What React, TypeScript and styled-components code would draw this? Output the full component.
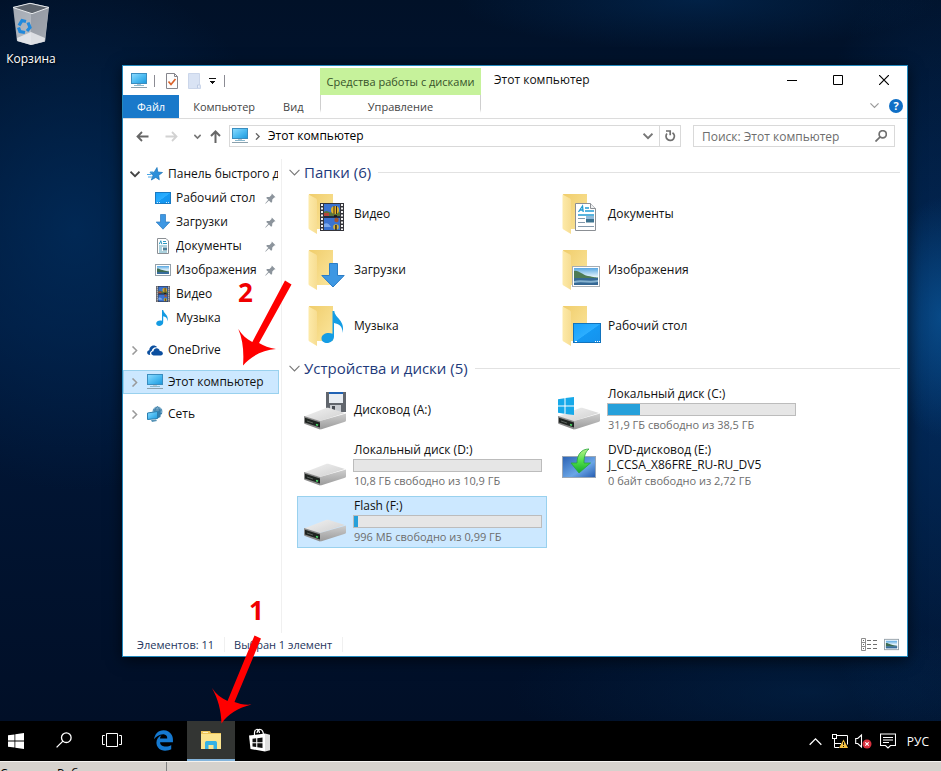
import React from "react";
import styled, { createGlobalStyle } from "styled-components";
import { FaEdgeLegacy } from "react-icons/fa6";

const GlobalStyle = createGlobalStyle`
  * { box-sizing: border-box; }
  html, body, #root { height: 100%; }
  body { margin: 0; background: #000; }
  body, button, input {
    font-family: "Open Sans", "Noto Sans", sans-serif;
    font-size: 12px;
    line-height: 15px;
  }
  button { border: 0; padding: 0; margin: 0; background: none; color: inherit; cursor: default; }
  svg { display: block; flex: none; }
`;

/* ---------- layout ---------- */

const Screen = styled.div`
  position: relative;
  display: flex;
  flex-direction: column;
  min-height: 100%;
  overflow: hidden;
`;

const Desktop = styled.main`
  flex: 1;
  display: flex;
  padding: 65px 33px 64px 0;
  background:
    radial-gradient(ellipse 60px 120px at 100% 44%, rgba(10, 84, 150, 0.75), transparent),
    radial-gradient(ellipse 150px 420px at 100% 50%, rgba(3, 52, 108, 0.7), transparent),
    radial-gradient(ellipse 220px 260px at 8% 32%, rgba(1, 48, 98, 0.7), transparent),
    radial-gradient(ellipse 240px 50px at 74% 0%, rgba(2, 40, 82, 0.7), transparent),
    radial-gradient(ellipse 300px 70px at 86% 96%, rgba(2, 36, 74, 0.6), transparent),
    linear-gradient(#011128, #01183a 45%, #010f27);
`;

const ShortcutColumn = styled.div`
  width: 122px;
  flex: none;
  margin-top: -63px;
`;

const Shortcut = styled.button`
  display: flex;
  flex-direction: column;
  align-items: center;
  gap: 5px;
  width: 62px;
  color: #fff;
  text-shadow: 1px 1px 2px #000;
`;

const Window = styled.section`
  flex: 1;
  min-width: 0;
  display: flex;
  flex-direction: column;
  background: #fff;
  border: 1px solid #2389bd;
  box-shadow: 0 3px 14px rgba(0, 0, 0, 0.6);
  color: #111;
`;

const Header = styled.header`
  display: flex;
  border-bottom: 1px solid #dcdcdc;
`;

const HeaderLeft = styled.div`
  width: 197px;
`;

const QuickAccess = styled.div`
  display: flex;
  align-items: center;
  height: 29px;
  padding-left: 8px;
`;

const ToolButton = styled.button<{ $gap: number }>`
  margin-left: ${(p) => p.$gap}px;
`;

const ToolDivider = styled.span<{ $gap: number }>`
  width: 1px;
  height: 12px;
  margin-left: ${(p) => p.$gap}px;
  background: #8b8b93;
`;

const Tabs = styled.div`
  display: flex;
  height: 23px;
`;

const Tab = styled.button<{ $active?: boolean }>`
  padding: 0 14px;
  font-size: 11px;
  color: ${(p) => (p.$active ? "#fff" : "#444")};
  background: ${(p) => (p.$active ? "#1979ca" : "transparent")};
`;

const ContextTab = styled.div`
  display: flex;
  flex-direction: column;
  width: 161px;
  padding-top: 2px;
`;

const ContextTitle = styled.div`
  height: 27px;
  font-size: 11px;
  line-height: 28px;
  text-align: center;
  white-space: nowrap;
  color: #37532a;
  background: #c6f29b;
`;

const ContextButton = styled.button`
  height: 23px;
  font-size: 11px;
  color: #444;
  border: 1px solid;
  border-width: 0 1px;
  border-image: linear-gradient(#cfcfcf 60%, #fff 75%) 1;
`;

const HeaderRight = styled.div`
  flex: 1;
  display: flex;
  flex-direction: column;
`;

const TitleRow = styled.div`
  display: flex;
  align-items: center;
  height: 27px;
  padding-left: 13px;
`;

const Title = styled.h1`
  flex: 1;
  margin: 0;
  font-size: 12px;
  font-weight: 400;
`;

const Caption = styled.button`
  display: flex;
  align-items: center;
  justify-content: center;
  width: 46px;
  height: 27px;
`;

const HelpRow = styled.div`
  display: flex;
  align-items: center;
  justify-content: flex-end;
  gap: 10px;
  height: 25px;
  padding-right: 4px;
`;

const Help = styled.button`
  width: 14px;
  height: 14px;
  border-radius: 50%;
  background: #0f6fc6;
  color: #fff;
  font-size: 11px;
  font-weight: 700;
  line-height: 14px;
`;

const AddressRow = styled.div`
  display: flex;
  align-items: center;
  height: 34px;
  padding: 0 12px;
`;

const NavButton = styled.button<{ $width: number }>`
  display: flex;
  align-items: center;
  justify-content: center;
  width: ${(p) => p.$width}px;
  height: 20px;
`;

const AddressBox = styled.div`
  flex: 1;
  display: flex;
  align-items: center;
  gap: 6px;
  height: 22px;
  padding-left: 2px;
  border: 1px solid #d9d9d9;
`;

const Crumb = styled.button`
  flex: 1;
  padding: 0 0 1px 1px;
  text-align: left;
  color: #000;
`;

const RefreshButton = styled(NavButton)`
  border-left: 1px solid #d9d9d9;
`;

const SearchBox = styled.label`
  display: flex;
  align-items: center;
  width: 202px;
  height: 22px;
  margin-left: 12px;
  padding: 0 7px 0 8px;
  border: 1px solid #d9d9d9;
`;

const SearchInput = styled.input`
  flex: 1;
  min-width: 0;
  padding: 0;
  border: 0;
  outline: 0;
  background: none;
  &::placeholder { color: #6d6d6d; opacity: 1; }
`;

const Body = styled.div`
  flex: 1;
  display: flex;
  margin-top: 6px;
`;

const Sidebar = styled.nav`
  display: flex;
  flex-direction: column;
  gap: 8px;
  width: 159px;
  padding: 3px 2px 0 0;
  border-right: 1px solid #f0f0f0;
`;

const TreeGroup = styled.div`
  display: flex;
  flex-direction: column;
`;

const TreeItem = styled.button<{ $nested?: boolean; $selected?: boolean }>`
  display: flex;
  align-items: center;
  height: 24px;
  gap: 5px;
  padding-left: ${(p) => (p.$nested ? 31 : 6)}px;
  padding-right: ${(p) => (p.$nested ? 2 : 0)}px;
  border: 1px solid ${(p) => (p.$selected ? "#99d1ee" : "transparent")};
  background: ${(p) => (p.$selected ? "#cce8ff" : "transparent")};
  color: #111;
`;

const TreeChevron = styled.span`
  width: 12px;
`;

const TreeLabel = styled.span`
  flex: 1;
  min-width: 0;
  padding-bottom: 1px;
  overflow: hidden;
  white-space: nowrap;
  text-align: left;
`;

const Content = styled.div`
  flex: 1;
  display: flex;
  flex-direction: column;
  gap: 5px;
  padding: 2px 7px 0 7px;
`;

const GroupHeader = styled.h2`
  display: flex;
  align-items: center;
  gap: 4px;
  height: 22px;
  margin: 0 0 5px;
  font-size: 15px;
  font-weight: 400;
  line-height: 22px;
  color: #1e3a7b;
  &::after {
    content: "";
    flex: 1;
    height: 1px;
    margin-left: 3px;
    background: #e2e2e2;
  }
`;

const Tiles = styled.div`
  display: grid;
  grid-template-columns: repeat(auto-fill, 250px);
  gap: 4px;
  padding-left: 8px;
`;

const Tile = styled.button<{ $selected?: boolean }>`
  display: flex;
  gap: 2px;
  height: 52px;
  padding: 1px 4px 1px 5px;
  text-align: left;
  color: #111;
  border: 1px solid ${(p) => (p.$selected ? "#99d1ee" : "transparent")};
  background: ${(p) => (p.$selected ? "#cce8ff" : "transparent")};
`;

const TileText = styled.span<{ $center?: boolean }>`
  flex: 1;
  display: flex;
  flex-direction: column;
  padding: 0 0 ${(p) => (p.$center ? 2 : 0)}px 1px;
  justify-content: ${(p) => (p.$center ? "center" : "flex-start")};
`;

const Muted = styled.span`
  margin-top: 1px;
  font-size: 11px;
  color: #6d6d6d;
`;

const Meter = styled.span`
  display: block;
  height: 13px;
  margin: 2px 0 0 -1px;
  border: 1px solid #bcbcbc;
  background: #e6e6e6;
`;

const MeterFill = styled.span`
  display: block;
  height: 100%;
  background: #26a0da;
`;

const StatusBar = styled.footer`
  display: flex;
  align-items: center;
  height: 23px;
  padding: 0 8px 0 14px;
  color: #25355c;
`;

const StatusText = styled.span`
  margin-right: 9px;
  padding-right: 10px;
  font-size: 11px;
  border-right: 1px solid #f0f0f0;
`;

const ViewButtons = styled.div`
  display: flex;
  gap: 7px;
  margin-left: auto;
`;

const Taskbar = styled.footer`
  display: flex;
  height: 40px;
  background: #000;
  color: #fff;
`;

const StartButton = styled.button`
  display: flex;
  align-items: center;
  width: 40px;
  padding-left: 8px;
`;

const TaskButton = styled.button<{ $active?: boolean }>`
  display: flex;
  align-items: center;
  justify-content: center;
  width: 48px;
  background: ${(p) => (p.$active ? "#333533" : "transparent")};
  border-bottom: 2px solid ${(p) => (p.$active ? "#85b5dc" : "transparent")};
`;

const AppButtons = styled.div`
  display: flex;
  margin-left: 3px;
`;

const Tray = styled.div`
  display: flex;
  align-items: center;
  margin-left: auto;
  padding-right: 12px;
`;

const TrayButton = styled.button`
  display: flex;
  justify-content: center;
  width: 24px;
`;

const Language = styled.button`
  margin-left: 7px;
`;

const HostBar = styled.div`
  display: flex;
  height: 10px;
  overflow: hidden;
  background: #d6d2cd;
  border-top: 1px solid #f4f2ef;
  color: #000;
`;

const HostCell = styled.span<{ $width: number }>`
  width: ${(p) => p.$width}px;
  height: 19px;
  padding-top: 4px;
  & + & { border-right: 1px solid #808080; }
`;

const Annotation = styled.div<{ $left: number; $top?: number; $bottom?: number }>`
  position: absolute;
  left: ${(p) => p.$left}px;
  top: ${(p) => (p.$top === undefined ? "auto" : `${p.$top}px`)};
  bottom: ${(p) => (p.$bottom === undefined ? "auto" : `${p.$bottom}px`)};
  color: #f00000;
  font-size: 26px;
  font-weight: 700;
  line-height: 26px;
  pointer-events: none;
`;

/* ---------- icons ---------- */

const HiddenDefs = styled.svg`
  position: absolute;
`;

const Gradients = () => (
  <HiddenDefs width="0" height="0" aria-hidden="true">
    <defs>
      <linearGradient id="screen" x1="0" y1="0" x2="1" y2="1">
        <stop offset="0" stopColor="#8fdcff" />
        <stop offset="0.5" stopColor="#4ebcf2" />
        <stop offset="1" stopColor="#1b98dc" />
      </linearGradient>
      <linearGradient id="folderBack" x1="0" y1="0" x2="1" y2="1">
        <stop offset="0" stopColor="#f0cd6c" />
        <stop offset="1" stopColor="#fbe69d" />
      </linearGradient>
      <linearGradient id="folderFront" x1="0" y1="0" x2="1" y2="0">
        <stop offset="0" stopColor="#fdeaa9" />
        <stop offset="1" stopColor="#f7dd92" />
      </linearGradient>
      <linearGradient id="driveTop" x1="0" y1="0" x2="1" y2="1">
        <stop offset="0" stopColor="#f2f2f2" />
        <stop offset="1" stopColor="#cfcfcf" />
      </linearGradient>
      <linearGradient id="driveSide" x1="0" y1="0" x2="0" y2="1">
        <stop offset="0" stopColor="#cecece" />
        <stop offset="1" stopColor="#9b9b9b" />
      </linearGradient>
      <linearGradient id="sky" x1="0" y1="0" x2="0" y2="1">
        <stop offset="0" stopColor="#58a7e2" />
        <stop offset="0.5" stopColor="#e0f1fb" />
        <stop offset="1" stopColor="#487fae" />
      </linearGradient>
      <linearGradient id="desktopBlue" x1="0" y1="0" x2="1" y2="1">
        <stop offset="0" stopColor="#16a1fa" />
        <stop offset="0.5" stopColor="#2caeff" />
        <stop offset="0.52" stopColor="#1499f3" />
        <stop offset="1" stopColor="#1592ec" />
      </linearGradient>
      <linearGradient id="dvd" x1="0" y1="0" x2="1" y2="1">
        <stop offset="0" stopColor="#2b62b4" />
        <stop offset="0.6" stopColor="#6aa5e6" />
        <stop offset="1" stopColor="#245bb0" />
      </linearGradient>
      <linearGradient id="green" x1="0" y1="0" x2="0" y2="1">
        <stop offset="0" stopColor="#b9f08b" />
        <stop offset="0.5" stopColor="#4fe04a" />
        <stop offset="1" stopColor="#16a82c" />
      </linearGradient>
      <linearGradient id="binSide" x1="0" y1="0" x2="1" y2="1">
        <stop offset="0" stopColor="#8d939b" />
        <stop offset="0.7" stopColor="#b9bec5" />
        <stop offset="1" stopColor="#e2e5e8" />
      </linearGradient>
    </defs>
  </HiddenDefs>
);

const PcIcon = () => (
  <svg width="16" height="16" viewBox="0 0 16 16">
    <rect x="0.5" y="0.5" width="15" height="10" fill="url(#screen)" stroke="#3a8dbf" />
    <rect x="6" y="11" width="4" height="1" fill="#b9c6ce" />
    <rect x="3" y="12" width="10" height="1" fill="#89b9cf" />
    <rect x="0" y="14" width="16" height="1" fill="#8ba1ad" />
  </svg>
);

const CheckDocIcon = () => (
  <svg width="12" height="16" viewBox="0 0 12 16">
    <path d="M.5.5h8l3 3v12H.5z" fill="#fdfdfd" stroke="#85858c" />
    <path d="M8.500 .5v3h3" fill="none" stroke="#85858c" />
    <path d="M2.500 8.500l2.500 3L9.500 6" fill="none" stroke="#d9622b" strokeWidth="1.700" />
  </svg>
);

const PaleDocIcon = () => (
  <svg width="13" height="16" viewBox="0 0 13 16">
    <path d="M.5.5h11v11l1 1v3H.5z" fill="#d9e3f4" stroke="#cbd6ea" />
    <path d="M9.500 15v-3h3" fill="#eef3fb" stroke="#bccae3" />
  </svg>
);

const Customize = () => (
  <svg width="7" height="6" viewBox="0 0 7 6">
    <path d="M0 0h7v1H0zM1 3h5v1H5v1H4v1H3V5H2V4H1z" fill="#111" />
  </svg>
);

const Chevron = ({ dir, size = 8, color = "#777", weight = 1.4 }: { dir: "down" | "right" | "up"; size?: number; color?: string; weight?: number }) => (
  <svg width={size} height={size} viewBox="0 0 10 10">
    <path
      d={dir === "down" ? "M.5 2.700L5 7.200l4.500-4.500" : dir === "up" ? "M.5 7.500L5 3l4.500 4.500" : "M2.800 .5L7.300 5 2.800 9.500"}
      fill="none"
      stroke={color}
      strokeWidth={(weight * 10) / size}
    />
  </svg>
);

const ArrowIcon = ({ dir, color }: { dir: "left" | "right" | "up"; color: string }) => (
  <svg width="13" height="13" viewBox="0 0 13 13">
    <path
      d={dir === "left" ? "M12.500 6.500H1.500M6 2L1.500 6.500 6 11" : dir === "right" ? "M.5 6.500h11M7 2l4.500 4.500L7 11" : "M6.500 13V1.500M2 6l4.500-4.500L11 6"}
      fill="none"
      stroke={color}
      strokeWidth={dir === "up" ? 2 : 1.8}
    />
  </svg>
);

const RefreshIcon = () => (
  <svg width="12" height="12" viewBox="0 0 12 12">
    <path d="M8.500 2.700A4.200 4.200 0 1 1 3 3.500" fill="none" stroke="#6f6f6f" strokeWidth="1.700" />
    <path d="M2 1h4.200v4.200" fill="none" stroke="#6f6f6f" strokeWidth="1.700" />
  </svg>
);

const Magnifier = ({ size, color, weight }: { size: number; color: string; weight: number }) => (
  <svg width={size} height={size} viewBox="0 0 16 16">
    <circle cx="10.300" cy="5.700" r="4.800" fill="none" stroke={color} strokeWidth={weight} />
    <path d="M6.900 9.100L.6 15.400" stroke={color} strokeWidth={weight} />
  </svg>
);

const StarIcon = () => (
  <svg width="16" height="16" viewBox="0 0 16 16">
    <path d="M10 1.500l.8 4.500 4.700.5-3.800 2.800.6 4.500-3.500-2.400-4.500 2.600 1.700-4.500-3-3 4.200-.3z" fill="#2c8fda" stroke="#1873b8" strokeWidth="0.700" />
    <path d="M0 8.500h4M1 11h4M3 6h3" stroke="#4aa6e6" strokeWidth="1" />
  </svg>
);

const DesktopIcon = () => (
  <svg width="16" height="16" viewBox="0 0 16 16">
    <rect x="0.500" y="2.500" width="15" height="11" fill="url(#desktopBlue)" stroke="#1879c2" />
    <path d="M2 12.500h1m1 0h1m6 0h1m1 0h1" stroke="#fff" strokeWidth="0.800" />
  </svg>
);

const DownIcon = () => (
  <svg width="16" height="16" viewBox="0 0 16 16">
    <path d="M5.500.5h5v7.500h4.300L8 15.200 1.200 8h4.300z" fill="#3d97e3" stroke="#2878be" strokeWidth="0.700" />
  </svg>
);

const DocIcon = () => (
  <svg width="16" height="16" viewBox="0 0 16 16">
    <path d="M2.500.5h8.500l2.500 2.500v12.500h-11z" fill="#fff" stroke="#8a8f94" />
    <path d="M4.300 6.200l1.500-3.500 1 3.500M8 3.500h3M8 5.500h4" fill="none" stroke="#2d9ac2" />
    <path d="M4 8h8M4 10h3M4 12h3M4 14h8" stroke="#58a5bd" />
    <path d="M8 9.500h4v3H8z" fill="#4b7e96" />
  </svg>
);

const PictureIcon = ({ width = 16, height = 16 }: { width?: number; height?: number }) => (
  <svg width={width} height={height} viewBox="0 0 16 16">
    <rect x="0.500" y="2.500" width="15" height="11" fill="#fff" stroke="#95a1aa" />
    <rect x="2" y="4" width="12" height="8" fill="url(#sky)" />
    <path d="M2 6.500c3 0 4 2 12 3V10H2z" fill="#3d6b51" />
    <path d="M2 10h12v2H2z" fill="#376c9c" />
  </svg>
);

const FilmArt = () => (
  <>
    <rect width="24" height="28" fill="#34343a" />
    <rect x="4" y="1" width="16" height="26" fill="#3b73d0" />
    <path d="M4 9c4-3 5 2 8 0s5-1 8 0v4H4z" fill="#58763b" />
    <path d="M4 10h5v3H4z" fill="#b5453d" />
    <circle cx="15" cy="7" r="4" fill="#e3b52c" />
    <path d="M13.500 3h1v8h-1zM16 3h1v8h-1z" fill="#3d2c1b" />
    <path d="M14 12h3v2h-3z" fill="#2f1d16" />
    <path d="M4 14h16" stroke="#16161b" strokeWidth="1.500" />
    <circle cx="16.500" cy="17" r="2.200" fill="#a5542f" />
    <path d="M4 21c3-2 5 0 7 3H4z" fill="#7ba9ec" />
    <circle cx="16" cy="24" r="2.800" fill="#d8b438" />
    <path d="M15.200 22h1.500v5h-1.500z" fill="#31251a" />
    <path d="M2 1v26M22 1v26" stroke="#f4f4f4" strokeWidth="2" strokeDasharray="2 1.500" />
  </>
);

const FilmIcon = () => (
  <svg width="16" height="16" viewBox="-2 0 28 28">
    <FilmArt />
  </svg>
);

const NoteIcon = () => (
  <svg width="16" height="16" viewBox="0 0 16 16">
    <path d="M7 0h1.200c.3 3.800 6.300 5 4 11.500.3-3.700-1.700-4.700-4-5.200v6.200c0 4-7 4.600-7 1C1.200 11 4.500 9.800 7 10.800z" fill="#149be2" />
  </svg>
);

const CloudIcon = () => (
  <svg width="16" height="16" viewBox="0 0 16 16">
    <path d="M3.200 13C-.8 13-.6 8.400 2.300 8.200 2.300 4 7.500 2 10 5.200c-3.400-.4-5 1.700-5.200 3.600C2.800 9.500 2.600 11.600 3.200 13z" fill="#0b4f9f" />
    <path d="M6.500 13.500c-3.200-.4-2.800-4.200 0-4.200C6.600 5.600 12.200 5 12.700 9c3.800-.2 4.300 4.500 1 4.500z" fill="#0b4f9f" />
  </svg>
);

const NetworkIcon = () => (
  <svg width="16" height="16" viewBox="0 0 16 16">
    <circle cx="10.500" cy="5.500" r="5" fill="#79abc9" />
    <path d="M6 4h9M6 7.500h9M10.500.5c-4 3-3 8 0 10 3-3 3-7 0-10" fill="none" stroke="#3a7aa5" strokeWidth="0.900" />
    <path d="M.5 7l10-1.500v7l-10 1z" fill="url(#screen)" stroke="#297eaf" />
    <path d="M10.500 5.500l3-1.500v7l-3 1.500z" fill="#327fae" />
    <path d="M4 14l5-.5 1 1.500-5 1z" fill="#5793b6" />
  </svg>
);

const PinIcon = () => (
  <svg width="11" height="11" viewBox="0 0 11 11">
    <path d="M6.800.5l3.700 3.700-1.300.3-1.900 2-.2 2.500-1 .8-2.200-2.300L.6 10.700l-.3-.4 3-3.500L1.200 4.900 2 4l2.500-.1 2-1.900z" fill="#8c949c" />
  </svg>
);

const Folder = ({ children }: { children: React.ReactNode }) => (
  <svg width="48" height="48" viewBox="0 0 48 48">
    <path d="M6 4h24v35H13z" fill="url(#folderBack)" />
    <path d="M5.500 4.500L13 8.500c.8.500 1 1.200 1 2V44l-7.500-4.500c-.7-.4-1-.9-1-1.800z" fill="url(#folderFront)" />
    {children}
  </svg>
);

const folderArt = {
  video: (
    <g transform="translate(17 13)">
      <FilmArt />
    </g>
  ),
  downloads: <path d="M26.500 17.500h8v12h6.700L30 41 18.800 29.500h7.700z" fill="#3d97e3" stroke="#2b7dc6" />,
  music: (
    <path d="M29.500 9h1.800c.5 7 11.500 9.500 8.200 22 .2-7-3.500-9-8.500-10v13.500c0 8-12.500 8.500-12.500 2 0-4.600 6-6.500 11-4.800z" fill="#159de4" />
  ),
  documents: (
    <>
      <path d="M18.500 13.500h15l5 5v22h-20z" fill="#fff" stroke="#8b8f94" />
      <path d="M33.500 13.500v5h5" fill="#eef0f2" stroke="#8b8f94" />
      <path d="M21.500 22l4-6 .7 6M22.500 20h4M28 18h4M28 21h9M21 25h16" fill="none" stroke="#209bd2" strokeWidth="1.300" />
      <path d="M21 28.500h7M21 32.500h7M21 36.500h16" stroke="#8499ab" />
      <path d="M29 26.500h8v6h-8z" fill="#3c728f" />
      <path d="M29 26.500h8v2.500h-8z" fill="#8ebbdc" />
    </>
  ),
  pictures: (
    <>
      <rect x="15.500" y="20.500" width="27" height="20" fill="#fff" stroke="#a6adb3" />
      <rect x="17" y="22" width="24" height="17" fill="url(#sky)" />
      <path d="M17 25c5-1 8 4 14 5s8 1.500 10 1.500V34H17z" fill="#4e7b55" />
      <path d="M17 32h24v7H17z" fill="#356894" />
      <path d="M17 35c8-2 15 1 24-1v2c-9 2-16-1-24 1z" fill="#86b2cf" />
    </>
  ),
  desktop: (
    <>
      <rect x="16.500" y="21.500" width="27" height="19" fill="url(#desktopBlue)" stroke="#1173bd" />
      <path d="M18 39.500h2m18 0h1m1 0h1m1 0h1" stroke="#fff" />
    </>
  ),
};

const DriveBody = () => (
  <>
    <path d="M1 30.500L23 22c1-.4 2-.4 3 0l16 5-25 8z" fill="url(#driveTop)" />
    <path d="M1 30l16 5v8.500L2 38c-.7-.3-1-.7-1-1.300z" fill="#8a8a8a" />
    <path d="M2 31.800l15 4.700v5L2 36.500z" fill="#1f2421" />
    <path d="M4 35l6 2" stroke="#59605b" />
    <path d="M13 38.500l2 .8" stroke="#4ddf6b" strokeWidth="1.600" />
    <path d="M17 35l26-7.500v7c0 .6-.3 1-1 1.300L18.500 43.300c-.5.200-1 .2-1.500 0z" fill="url(#driveSide)" />
  </>
);

const DriveIcon = ({ kind }: { kind: "plain" | "floppy" | "windows" }) => (
  <svg width="48" height="48" viewBox="0 0 48 48">
    {kind === "floppy" && (
      <>
        <path d="M23 6h20v20H25l-2-2z" fill="#61666d" />
        <path d="M26 6h14v11H26z" fill="#e8edf2" />
        <path d="M26 6h14v2H26z" fill="#1f62b5" />
        <path d="M27 19h11v7H27z" fill="#c8ccd1" />
        <path d="M29 20h3v6h-3z" fill="#474c53" />
      </>
    )}
    <g>
      <DriveBody />
    </g>
    {kind === "windows" && (
      <path d="M1 13.200l6.500-.9v7.200H1zM8.500 12.100L17 11v8.500H8.500zM1 20.500h6.500v7.200L1 26.800zM8.500 20.500H17V29l-8.500-1.100z" fill="#17a9e9" />
    )}
  </svg>
);

const DvdIcon = () => (
  <svg width="48" height="48" viewBox="0 0 48 48">
    <rect x="5.500" y="14.500" width="33" height="21" fill="url(#dvd)" stroke="#9aa7b6" />
    <path d="M14 21h6c0-8 4-14 12-14-4 3-5 8-5 14h6.500L22 31z" fill="url(#green)" stroke="#27a63a" strokeWidth="0.800" />
  </svg>
);

const BinIcon = () => (
  <svg width="40" height="44" viewBox="0 0 40 44">
    <path d="M2 5L20 1l18 4-4 34.500L20 43 6 39z" fill="url(#binSide)" />
    <path d="M2.500 5.500L20 10v32.500L6.500 39z" fill="#b4bac2" fillOpacity="0.550" />
    <path d="M20 11l17.500-5L34 39.500 20 43z" fill="#9096a0" fillOpacity="0.700" />
    <path d="M6 36l14-6 14 6-.5 3.500L20 43 6.500 39z" fill="#f0f2f4" fillOpacity="0.750" />
    <path d="M2 5.500L19 1.300l19 4.200-17 6.200z" fill="#5d646d" stroke="#e6e9ec" />
    <g fill="none" stroke="#2189dc" strokeWidth="3.200">
      <path d="M8 23.500l3-5 4 1" />
      <path d="M17 20.500l2 5-3 3.500" />
      <path d="M14 30.500l-5-1-1.500-4" />
    </g>
  </svg>
);

const WinLogo = () => (
  <svg width="16" height="16" viewBox="0 0 16 16">
    <path d="M0 2.300l6.500-.9v6.200H0zM7.300 1.300L16 0v7.600H7.300zM0 8.400h6.500v6.200L0 13.700zM7.300 8.400H16V16l-8.700-1.300z" fill="#fff" />
  </svg>
);

const TaskViewIcon = () => (
  <svg width="20" height="14" viewBox="0 0 20 14">
    <path d="M4.500.5h11v13h-11zM2.800 2.500H.5v9h2.300M17.200 2.500h2.300v9h-2.300" fill="none" stroke="#fff" />
  </svg>
);

const ExplorerIcon = () => (
  <svg width="22" height="20" viewBox="0 0 22 20">
    <path d="M1 1h9l1 2h10v16H1z" fill="#efc65a" />
    <path d="M1 4h20v15H1z" fill="#fce48f" />
    <path d="M3 2h5v1H3z" fill="#fff2bf" />
    <path d="M5 19v-6c0-1 .5-2 1.500-2h9c1 0 1.500 1 1.500 2v6h-3.500v-4h-5v4z" fill="#35b2e5" />
  </svg>
);

const StoreIcon = () => (
  <svg width="21" height="24" viewBox="0 0 21 24">
    <path d="M5.500 7C5 0 10 0 10.500 5M8 5C9 0 14 0 14.500 7" fill="none" stroke="#fff" strokeWidth="1.200" />
    <path d="M0 7.500L16 5.500v18L1.500 21z" fill="#fff" />
    <path d="M16 5.500l5 1.200v15.500l-5 1.300z" fill="#dedede" />
    <path d="M3.500 10.800l3.700-.5v3.900H3.500zM8.300 10.200l5.200-.7v4.700H8.300zM3.500 15.200h3.700v3.900l-3.700-.5zM8.300 15.200h5.200v4.700l-5.200-.7z" fill="#111" />
  </svg>
);

const NetTrayIcon = () => (
  <svg width="16" height="16" viewBox="0 0 16 16">
    <path d="M5 2.500h10.500v9M2.500 5.500v9H7M2.500 10.500H9" fill="none" stroke="#fff" />
    <rect x="0.500" y="1.500" width="4" height="4" fill="#000" stroke="#fff" />
    <path d="M11.500 6.500L16 15H7z" fill="#f5c242" />
    <path d="M11 9h1v3h-1zM11 13h1v1h-1z" fill="#111" />
  </svg>
);

const VolumeIcon = () => (
  <svg width="17" height="16" viewBox="0 0 17 16">
    <path d="M.7 5.500h2L6.500 2v12L2.700 10.500h-2z" fill="none" stroke="#fff" strokeWidth="1.100" />
    <circle cx="12" cy="11" r="4.500" fill="#d9313f" />
    <path d="M10.300 9.300l3.400 3.400m0-3.400l-3.400 3.400" stroke="#fff" strokeWidth="1.100" />
  </svg>
);

const ActionIcon = () => (
  <svg width="16" height="16" viewBox="0 0 16 16">
    <path d="M.5 1h15v11.500h-5L8 15l-2.500-2.500h-5zM3 4.500h10M3 7h10M3 9.500h6" fill="none" stroke="#fff" strokeWidth="1.100" />
  </svg>
);

const DetailsIcon = () => (
  <svg width="16" height="13" viewBox="0 0 16 13">
    <path d="M.5.500h4v12h-4zM.5 4.500h4M.5 8.500h4" fill="#fff" stroke="#8d8d8d" />
    <path d="M6 2.500h4M6 6.500h4M6 10.500h4M12 2.500h4M12 6.500h4M12 10.500h4" stroke="#6f6f6f" />
    <path d="M2 2h1v1H2zM2 6h1v1H2zM2 10h1v1H2z" fill="#666" />
  </svg>
);

/* ---------- data ---------- */

const quickItems = [
  { label: "Рабочий стол", icon: <DesktopIcon />, pinned: true },
  { label: "Загрузки", icon: <DownIcon />, pinned: true },
  { label: "Документы", icon: <DocIcon />, pinned: true },
  { label: "Изображения", icon: <PictureIcon />, pinned: true },
  { label: "Видео", icon: <FilmIcon />, pinned: false },
  { label: "Музыка", icon: <NoteIcon />, pinned: false },
];

const roots = [
  { label: "OneDrive", icon: <CloudIcon />, selected: false },
  { label: "Этот компьютер", icon: <PcIcon />, selected: true },
  { label: "Сеть", icon: <NetworkIcon />, selected: false },
];

const folders: { label: string; art: keyof typeof folderArt }[] = [
  { label: "Видео", art: "video" },
  { label: "Документы", art: "documents" },
  { label: "Загрузки", art: "downloads" },
  { label: "Изображения", art: "pictures" },
  { label: "Музыка", art: "music" },
  { label: "Рабочий стол", art: "desktop" },
];

type Device = { name: string; icon: React.ReactNode; label?: string; used?: number; free?: string; selected?: boolean };

const devices: Device[] = [
  { name: "Дисковод (A:)", icon: <DriveIcon kind="floppy" /> },
  { name: "Локальный диск (C:)", icon: <DriveIcon kind="windows" />, used: 17, free: "31,9 ГБ свободно из 38,5 ГБ" },
  { name: "Локальный диск (D:)", icon: <DriveIcon kind="plain" />, used: 0, free: "10,8 ГБ свободно из 10,9 ГБ" },
  { name: "DVD-дисковод (E:)", icon: <DvdIcon />, label: "J_CCSA_X86FRE_RU-RU_DV5", free: "0 байт свободно из 2,72 ГБ" },
  { name: "Flash (F:)", icon: <DriveIcon kind="plain" />, used: 2, free: "996 МБ свободно из 0,99 ГБ", selected: true },
];

/* ---------- page ---------- */

const WindowHeader = () => (
  <Header>
    <HeaderLeft>
      <QuickAccess>
        <PcIcon />
        <ToolDivider $gap={7} />
        <ToolButton $gap={11} aria-label="Свойства"><CheckDocIcon /></ToolButton>
        <ToolButton $gap={10} aria-label="Новая папка"><PaleDocIcon /></ToolButton>
        <ToolButton $gap={8} aria-label="Настройка панели"><Customize /></ToolButton>
        <ToolDivider $gap={8} />
      </QuickAccess>
      <Tabs>
        <Tab $active>Файл</Tab>
        <Tab>Компьютер</Tab>
        <Tab>Вид</Tab>
      </Tabs>
    </HeaderLeft>
    <ContextTab>
      <ContextTitle>Средства работы с дисками</ContextTitle>
      <ContextButton>Управление</ContextButton>
    </ContextTab>
    <HeaderRight>
      <TitleRow>
        <Title>Этот компьютер</Title>
        <Caption aria-label="Свернуть">
          <svg width="10" height="10"><path d="M0 5.500h10" stroke="#000" /></svg>
        </Caption>
        <Caption aria-label="Развернуть">
          <svg width="10" height="10"><path d="M.5.5h9v9h-9z" fill="none" stroke="#000" /></svg>
        </Caption>
        <Caption aria-label="Закрыть">
          <svg width="10" height="10"><path d="M0 0l10 10m0-10L0 10" stroke="#000" strokeWidth="1.200" /></svg>
        </Caption>
      </TitleRow>
      <HelpRow>
        <Chevron dir="down" size={9} color="#9a9a9a" weight={1.2} />
        <Help aria-label="Справка">?</Help>
      </HelpRow>
    </HeaderRight>
  </Header>
);

const AddressBar = () => (
  <AddressRow>
    <NavButton $width={15} aria-label="Назад"><ArrowIcon dir="left" color="#666" /></NavButton>
    <NavButton $width={42} aria-label="Вперёд"><ArrowIcon dir="right" color="#d2d2d2" /></NavButton>
    <NavButton $width={10} aria-label="Последние"><Chevron dir="down" size={7} weight={1.6} /></NavButton>
    <NavButton $width={27} aria-label="Вверх"><ArrowIcon dir="up" color="#666" /></NavButton>
    <AddressBox>
      <PcIcon />
      <Chevron dir="right" size={7} color="#666" />
      <Crumb>Этот компьютер</Crumb>
      <NavButton $width={10} aria-label="Адреса"><Chevron dir="down" size={10} weight={2} /></NavButton>
      <RefreshButton $width={21} aria-label="Обновить"><RefreshIcon /></RefreshButton>
    </AddressBox>
    <SearchBox>
      <SearchInput type="search" aria-label="Поиск" placeholder="Поиск: Этот компьютер" />
      <Magnifier size={12} color="#707070" weight={2.3} />
    </SearchBox>
  </AddressRow>
);

const Tree = () => (
  <Sidebar aria-label="Область переходов">
    <TreeGroup>
      <TreeItem>
        <TreeChevron><Chevron dir="down" size={10} color="#444" weight={1.8} /></TreeChevron>
        <StarIcon />
        <TreeLabel>Панель быстрого доступа</TreeLabel>
      </TreeItem>
      {quickItems.map((item) => (
        <TreeItem key={item.label} $nested>
          {item.icon}
          <TreeLabel>{item.label}</TreeLabel>
          {item.pinned && <PinIcon />}
        </TreeItem>
      ))}
    </TreeGroup>
    {roots.map((item) => (
      <TreeItem key={item.label} $selected={item.selected}>
        <TreeChevron><Chevron dir="right" size={9} color="#9a9a9a" weight={1.5} /></TreeChevron>
        {item.icon}
        <TreeLabel>{item.label}</TreeLabel>
      </TreeItem>
    ))}
  </Sidebar>
);

const DeviceTile = ({ device }: { device: Device }) => (
  <Tile $selected={device.selected}>
    {device.icon}
    <TileText $center={!device.free}>
      <span>{device.name}</span>
      {device.label && <span>{device.label}</span>}
      {device.used !== undefined && (
        <Meter role="meter" aria-label={device.name} aria-valuenow={device.used}>
          <MeterFill style={{ width: `${device.used}%` }} />
        </Meter>
      )}
      {device.free && <Muted>{device.free}</Muted>}
    </TileText>
  </Tile>
);

export default function App() {
  return (
    <Screen>
      <GlobalStyle />
      <Gradients />
      <Desktop>
        <ShortcutColumn>
          <Shortcut><BinIcon />Корзина</Shortcut>
        </ShortcutColumn>
        <Window>
          <WindowHeader />
          <AddressBar />
          <Body>
            <Tree />
            <Content>
              <section>
                <GroupHeader><Chevron dir="down" size={11} weight={1.1} />Папки (6)</GroupHeader>
                <Tiles>
                  {folders.map((f) => (
                    <Tile key={f.label}>
                      <Folder>{folderArt[f.art]}</Folder>
                      <TileText $center>{f.label}</TileText>
                    </Tile>
                  ))}
                </Tiles>
              </section>
              <section>
                <GroupHeader><Chevron dir="down" size={11} weight={1.1} />Устройства и диски (5)</GroupHeader>
                <Tiles>
                  {devices.map((d) => <DeviceTile key={d.name} device={d} />)}
                </Tiles>
              </section>
            </Content>
          </Body>
          <StatusBar>
            <StatusText>Элементов: 11</StatusText>
            <StatusText>Выбран 1 элемент</StatusText>
            <ViewButtons>
              <button aria-label="Таблица"><DetailsIcon /></button>
              <button aria-label="Крупные значки"><PictureIcon width={15} height={15} /></button>
            </ViewButtons>
          </StatusBar>
        </Window>
      </Desktop>
      <Taskbar>
        <StartButton aria-label="Пуск"><WinLogo /></StartButton>
        <TaskButton aria-label="Поиск"><Magnifier size={16} color="#fff" weight={1.3} /></TaskButton>
        <TaskButton aria-label="Представление задач"><TaskViewIcon /></TaskButton>
        <AppButtons>
          <TaskButton aria-label="Edge"><FaEdgeLegacy size={21} color="#1579d0" /></TaskButton>
          <TaskButton $active aria-label="Проводник"><ExplorerIcon /></TaskButton>
          <TaskButton aria-label="Магазин"><StoreIcon /></TaskButton>
        </AppButtons>
        <Tray>
          <TrayButton aria-label="Скрытые значки"><Chevron dir="up" size={13} color="#fff" weight={1.3} /></TrayButton>
          <TrayButton aria-label="Сеть"><NetTrayIcon /></TrayButton>
          <TrayButton aria-label="Громкость"><VolumeIcon /></TrayButton>
          <TrayButton aria-label="Уведомления"><ActionIcon /></TrayButton>
          <Language>РУС</Language>
        </Tray>
      </Taskbar>
      <HostBar>
        <HostCell $width={57}>С</HostCell>
        <HostCell $width={110}>Раб</HostCell>
      </HostBar>
      <Annotation $left={238} $top={279}>2</Annotation>
      <Annotation $left={238} $top={280}>
        <svg width="54" height="86" viewBox="0 0 54 86">
          <path d="M47 .5l6.500 4L21 63c5 3 10 5 17 6C25 70 13 76 5 85.500 6 72 5 60 .3 49c4 6 8 10 14 13z" fill="#f00" />
        </svg>
      </Annotation>
      <Annotation $left={249} $bottom={148}>1</Annotation>
      <Annotation $left={212} $bottom={47}>
        <svg width="50" height="89" viewBox="0 0 50 89">
          <path d="M42.500 .5l6.500 3L22.500 67c5 2 10 3 17 2.500C26 73 16 79 9.500 88.500 9 75 6 64 0 53c4 6 9 10 15.500 13z" fill="#f00" />
        </svg>
      </Annotation>
    </Screen>
  );
}
